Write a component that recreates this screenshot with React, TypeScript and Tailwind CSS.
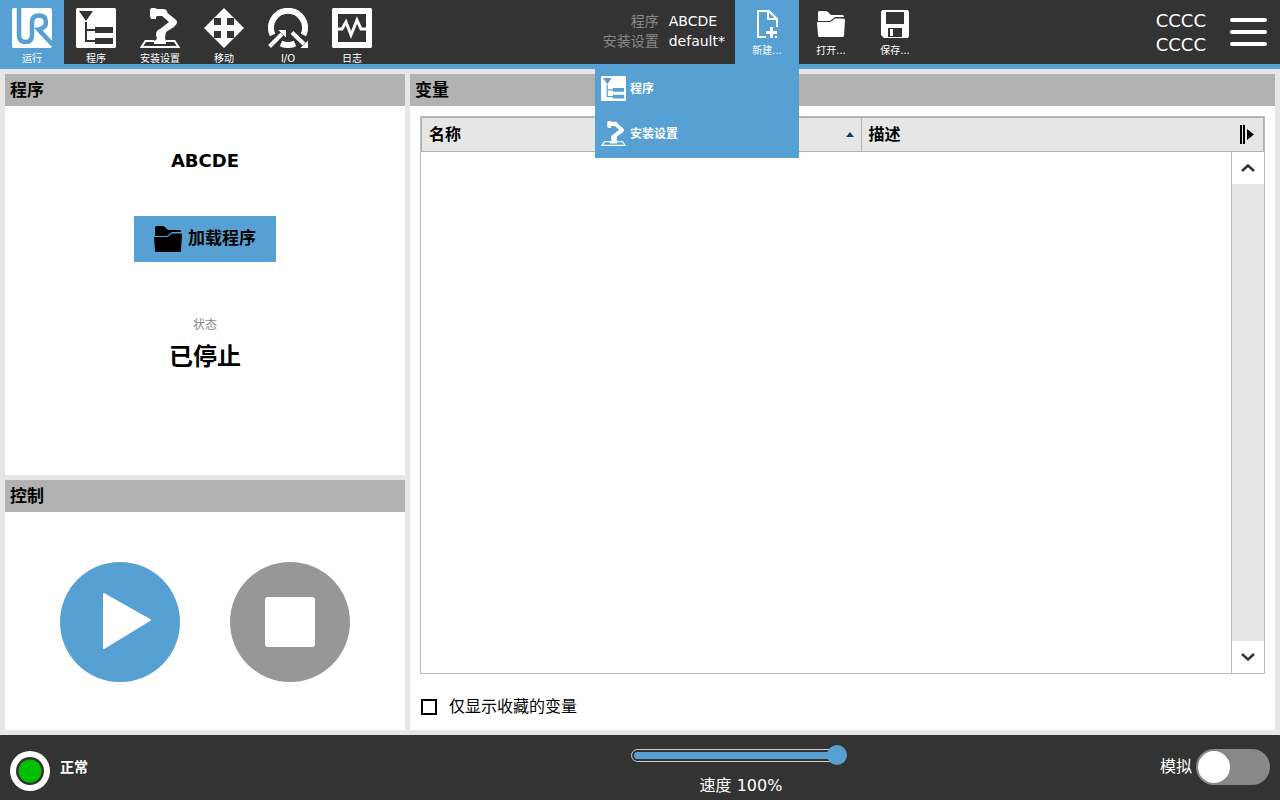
import { useState } from 'react'
import type { ReactNode } from 'react'
import clsx from 'clsx'

type IconProps = { className?: string }

function RunIcon({ className }: IconProps) {
  return (
    <svg viewBox="0 0 40 40" className={className} aria-hidden="true">
      <rect width="40" height="40" rx="2" fill="#fff" />
      <path
        d="M7 0V27Q7 34 13.500 34Q20 34 20 27V14Q20 7.500 27 7.500Q34 7.500 34 14.500Q34 20 26.500 21.500L41 37"
        fill="none"
        stroke="#56a0d3"
        strokeWidth="4.500"
      />
    </svg>
  )
}

function ProgramIcon({ className }: IconProps) {
  return (
    <svg viewBox="0 0 40 40" className={className} aria-hidden="true">
      <path
        fill="#fff"
        fillRule="evenodd"
        d="M1 0H39L40 1V39L39 40H1L0 39V1ZM3 3L10 13L17 3ZM9 14V34H19V36H37V30H19V32H11V23H19V25H37V19H19V21H11V14Z"
      />
    </svg>
  )
}

function RobotIcon({ className }: IconProps) {
  return (
    <svg viewBox="0 0 40 40" className={className} aria-hidden="true">
      <path
        d="M14 33H5.500L1.500 39H38.500L34.500 33H26"
        fill="none"
        stroke="#fff"
        strokeWidth="2"
      />
      <path
        fill="#fff"
        d="M10 2Q10 0 12 0H15L17 1H23Q27 1 27.500 5L35 11Q38 13 36.500 16L34 19L26 24L25 30L26 33V36H14V33L17 31L16 27Q16 22 20 21L29 14L22 8H17L16 9V11H11L10 8Z"
      />
    </svg>
  )
}

function MoveIcon({ className }: IconProps) {
  return (
    <svg viewBox="0 0 40 40" className={className} aria-hidden="true">
      <path
        fill="#fff"
        d="M20 0L30 10H23V17H30V10L40 20L30 30V23H23V30H30L20 40L10 30H17V23H10V30L0 20L10 10V17H17V10H10Z"
      />
    </svg>
  )
}

function IoIcon({ className }: IconProps) {
  return (
    <svg viewBox="0 0 40 40" className={className} aria-hidden="true">
      <path
        d="M4.600 27A17 17 0 1 1 35.400 27M13 35.500A17 17 0 0 0 27 35.500"
        fill="none"
        stroke="#fff"
        strokeWidth="6"
      />
      <path d="M1.500 38.500L14 26M24 24.500L36 36" fill="none" stroke="#fff" strokeWidth="4" />
      <path fill="#fff" d="M10.500 22H18V29.500ZM40 32.500V40H32.500Z" />
    </svg>
  )
}

function LogIcon({ className }: IconProps) {
  return (
    <svg viewBox="0 0 40 40" className={className} aria-hidden="true">
      <path
        fill="#fff"
        fillRule="evenodd"
        d="M1 0H39L40 1V39L39 40H1L0 39V1ZM6 6V34H34V6Z"
      />
      <path d="M5 21H10L14 14L19 27L25 12L29 21H35" fill="none" stroke="#fff" strokeWidth="3" />
    </svg>
  )
}

function NewFileIcon({ className }: IconProps) {
  return (
    <svg viewBox="0 0 28 28" className={className} aria-hidden="true">
      <path
        d="M13 27H5V1H16L24 9V17M15 1V9H24"
        fill="none"
        stroke="#fff"
        strokeWidth="2"
        strokeLinejoin="round"
      />
      <path d="M18.500 17V28M13 22.500H24" fill="none" stroke="#fff" strokeWidth="3" />
      <path fill="#fff" d="M22 26H24V28H22Z" />
    </svg>
  )
}

function FolderIcon({ className }: IconProps) {
  return (
    <svg viewBox="0 0 28 26" className={className} aria-hidden="true" fill="currentColor">
      <path d="M1 9V1.500Q1 0 2.500 0H9L11 1L14 4H25.500Q27 4 27 6H18L13 10H1Z" />
      <path d="M0 11H13.500L18 7.500H26.500Q28 7.500 28 9L27 24.500Q27 26 25.500 26H2.500Q1 26 1 24.500Z" />
    </svg>
  )
}

function SaveIcon({ className }: IconProps) {
  return (
    <svg viewBox="0 0 28 28" className={className} aria-hidden="true">
      <path
        fill="#fff"
        fillRule="evenodd"
        d="M1.500 0H26.500L28 1.500V26.500L26.500 28H3L0 25V1.500ZM5 2V14H23V2ZM7 18V27H21V18ZM9 19H12V26H9Z"
      />
    </svg>
  )
}

function Chevron({ up }: { up?: boolean }) {
  return (
    <svg viewBox="0 0 14 8" className="h-2 w-3.5" aria-hidden="true">
      <path
        d={up ? 'M1 7L7 1.500L13 7' : 'M1 1L7 6.500L13 1'}
        fill="none"
        stroke="#333"
        strokeWidth="2.500"
      />
    </svg>
  )
}

const tabs = [
  { id: 'run', label: '运行', icon: RunIcon },
  { id: 'program', label: '程序', icon: ProgramIcon },
  { id: 'installation', label: '安装设置', icon: RobotIcon },
  { id: 'move', label: '移动', icon: MoveIcon },
  { id: 'io', label: 'I/O', icon: IoIcon },
  { id: 'log', label: '日志', icon: LogIcon },
]

function FileButton({
  label,
  active,
  onClick,
  children,
}: {
  label: string
  active?: boolean
  onClick?: () => void
  children: ReactNode
}) {
  return (
    <button
      type="button"
      onClick={onClick}
      className={clsx(
        'flex h-16 w-16 flex-col items-center gap-[7px] pt-2.5 text-[10px] leading-3',
        active && 'bg-[#56a0d3]',
      )}
    >
      {children}
      {label}
    </button>
  )
}

function Panel({
  title,
  className,
  children,
}: {
  title: string
  className?: string
  children: ReactNode
}) {
  return (
    <section className={clsx('flex flex-col bg-white', className)}>
      <h2 className="h-8 bg-[#b2b2b2] px-[5px] text-[17px] leading-8 font-bold">{title}</h2>
      {children}
    </section>
  )
}

function Header() {
  const [tab, setTab] = useState('run')
  const [menuOpen, setMenuOpen] = useState(true)

  return (
    <header className="flex border-b-[5px] border-[#56a0d3] bg-[#333] text-white">
      <nav className="flex">
        {tabs.map((item) => (
          <button
            key={item.id}
            type="button"
            onClick={() => setTab(item.id)}
            className={clsx(
              'flex h-16 w-16 flex-col items-center gap-[5px] pt-2 text-[10px] leading-3',
              tab === item.id && 'bg-[#56a0d3]',
            )}
          >
            <item.icon className="size-10 shrink-0" />
            {item.label}
          </button>
        ))}
      </nav>

      <div className="ml-auto flex">
        <dl className="mr-2.5 grid grid-cols-[auto_auto] content-start gap-x-2.5 pt-[11px] text-sm">
          <dt className="text-right text-[#888]">程序</dt>
          <dd>ABCDE</dd>
          <dt className="text-right text-[#888]">安装设置</dt>
          <dd>default*</dd>
        </dl>
        <div className="relative">
          <FileButton label="新建..." active={menuOpen} onClick={() => setMenuOpen(!menuOpen)}>
            <NewFileIcon className="size-7" />
          </FileButton>
          {menuOpen && (
            <div className="absolute top-full right-0 z-10 w-[204px] bg-[#56a0d3] py-0.5 text-xs font-bold">
              <button type="button" className="flex h-[45px] w-full items-center gap-1 px-1.5">
                <ProgramIcon className="size-[25px]" />
                程序
              </button>
              <button type="button" className="flex h-[45px] w-full items-center gap-1 px-1.5">
                <RobotIcon className="size-[25px]" />
                安装设置
              </button>
            </div>
          )}
        </div>
        <FileButton label="打开...">
          <FolderIcon className="size-7" />
        </FileButton>
        <FileButton label="保存...">
          <SaveIcon className="size-7" />
        </FileButton>
      </div>

      <div className="flex w-[353px] items-start justify-end gap-6 pr-[13px]">
        <p className="pt-[9px] text-right text-lg leading-6">
          CCCC
          <br />
          CCCC
        </p>
        <button type="button" aria-label="Menu" className="flex flex-col gap-2 pt-[18px]">
          <span className="h-1 w-[37px] rounded-xs bg-white" />
          <span className="h-1 w-[37px] rounded-xs bg-white" />
          <span className="h-1 w-[37px] rounded-xs bg-white" />
        </button>
      </div>
    </header>
  )
}

function VariablesTable() {
  return (
    <div className="flex flex-1 flex-col border border-[#bbb]">
      <table className="w-full table-fixed border-collapse border border-[#b2b2b2] bg-[#e6e6e6] text-left">
        <thead>
          <tr className="h-[34px]">
            <th scope="col" className="w-[52.2%] border border-[#b2b2b2] px-[7px]">
              <span className="flex items-center justify-between">
                名称
                <svg viewBox="0 0 8 5" className="h-[5px] w-2" aria-label="Ascending">
                  <path d="M4 0L8 5H0Z" fill="#234058" />
                </svg>
              </span>
            </th>
            <th scope="col" className="border border-[#b2b2b2] px-[7px]">
              <span className="flex items-center justify-between">
                描述
                <button type="button" aria-label="Columns" className="mr-0.5">
                  <svg viewBox="0 0 14 19" className="h-[19px] w-3.5" aria-hidden="true">
                    <path d="M0 0H2V19H0ZM3 0H5V19H3ZM7 4L14 9.500L7 15Z" />
                  </svg>
                </button>
              </span>
            </th>
          </tr>
        </thead>
      </table>
      <div className="flex flex-1 justify-end">
        <div className="flex w-[33px] flex-col justify-between border-l border-[#bbb] bg-[#e6e6e6]">
          <button
            type="button"
            aria-label="Scroll up"
            className="flex h-8 items-center justify-center bg-white"
          >
            <Chevron up />
          </button>
          <button
            type="button"
            aria-label="Scroll down"
            className="flex h-8 items-center justify-center bg-white"
          >
            <Chevron />
          </button>
        </div>
      </div>
    </div>
  )
}

function Footer() {
  const [speed, setSpeed] = useState(100)

  return (
    <footer className="grid h-[65px] grid-cols-[1fr_auto_1fr] bg-[#333] text-white">
      <div className="flex items-start gap-2.5 pt-4 pl-2.5">
        <svg viewBox="0 0 40 40" className="size-10" aria-hidden="true">
          <circle cx="20" cy="20" r="20" fill="#fff" />
          <circle cx="20" cy="20" r="14" fill="#333" />
          <circle cx="20" cy="20" r="11.500" fill="#00bf00" />
        </svg>
        <span className="pt-1 text-sm leading-6 font-bold">正常</span>
      </div>

      <div className="flex flex-col items-center pt-2.5 pl-[198px]">
        <div className="grid w-[216px] items-center">
          <div className="col-start-1 row-start-1 mr-1.5 h-[13px] rounded-full border border-[#ccc] p-0.5">
            <div className="h-full rounded-full bg-[#56a0d3]" style={{ width: `${speed}%` }} />
          </div>
          <input
            id="speed"
            type="range"
            min={0}
            max={100}
            value={speed}
            onChange={(e) => setSpeed(Number(e.target.value))}
            className="col-start-1 row-start-1 h-5 w-full appearance-none bg-transparent [&::-webkit-slider-thumb]:size-5 [&::-webkit-slider-thumb]:appearance-none [&::-webkit-slider-thumb]:rounded-full [&::-webkit-slider-thumb]:bg-[#56a0d3]"
          />
        </div>
        <label htmlFor="speed" className="pt-[9px] pl-1">
          速度 {speed}%
        </label>
      </div>

      <label className="flex items-start justify-end gap-1 pt-3.5 pr-2.5">
        <span className="leading-9">模拟</span>
        <input
          type="checkbox"
          role="switch"
          className="flex h-9 w-[74px] appearance-none items-center rounded-full bg-[#888] px-0.5 before:size-8 before:rounded-full before:bg-white checked:justify-end"
        />
      </label>
    </footer>
  )
}

export default function App() {
  return (
    <div className="flex min-h-screen flex-col bg-[#e6e6e6] font-['DejaVu_Sans','Noto_Sans_CJK_SC',sans-serif] text-base text-black">
      <Header />

      <main className="flex flex-1 gap-[5px] p-[5px]">
        <div className="flex w-[400px] shrink-0 flex-col gap-[5px]">
          <Panel title="程序" className="flex-1">
            <div className="flex flex-col items-center pt-[41px]">
              <p className="text-lg font-bold">ABCDE</p>
              <button
                type="button"
                className="mt-[41px] flex h-[46px] items-center gap-1.5 bg-[#56a0d3] px-5 text-[17px] font-bold"
              >
                <FolderIcon className="h-[26px] w-7" />
                加载程序
              </button>
              <p className="mt-[55px] text-xs text-[#888]">状态</p>
              <p className="mt-2 text-2xl font-bold">已停止</p>
            </div>
          </Panel>

          <Panel title="控制" className="h-[250px]">
            <div className="flex justify-center gap-[50px] pt-[50px]">
              <button type="button" aria-label="Play">
                <svg viewBox="0 0 120 120" className="size-[120px]">
                  <circle cx="60" cy="60" r="60" fill="#56a0d3" />
                  <path
                    d="M44 32L90 58L44 86Z"
                    fill="#fff"
                    stroke="#fff"
                    strokeWidth="2"
                    strokeLinejoin="round"
                  />
                </svg>
              </button>
              <button type="button" aria-label="Stop">
                <svg viewBox="0 0 120 120" className="size-[120px]">
                  <circle cx="60" cy="60" r="60" fill="#979797" />
                  <rect x="35" y="35" width="50" height="50" rx="3" fill="#fff" />
                </svg>
              </button>
            </div>
          </Panel>
        </div>

        <Panel title="变量" className="flex-1">
          <div className="flex flex-1 flex-col px-2.5 pt-2.5 pb-[11px]">
            <VariablesTable />
            <label className="mt-[21px] flex items-center gap-3 px-px">
              <input
                type="checkbox"
                className="size-4 appearance-none border-2 border-black checked:bg-[#56a0d3]"
              />
              仅显示收藏的变量
            </label>
          </div>
        </Panel>
      </main>

      <Footer />
    </div>
  )
}
